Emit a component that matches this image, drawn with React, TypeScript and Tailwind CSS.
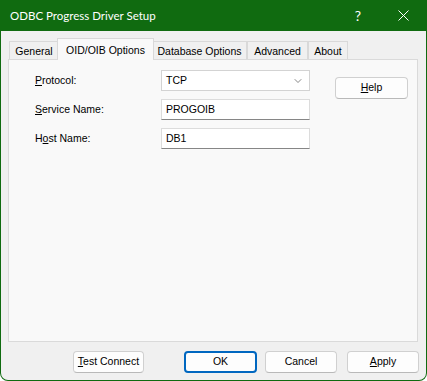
import { ChevronDown } from 'lucide-react';

const ui = "font-['Liberation_Sans',Arial,sans-serif] text-[10.5px] text-black";

function Tab({ label, w, active }: { label: string; w: string; active?: boolean }) {
  return (
    <div
      className={
        (active
          ? 'z-10 -mx-[2px] -mb-px flex h-[22px] items-start justify-center border border-b-0 border-[#d9d9d9] bg-[#f9f9f9] pt-[4px] '
          : 'flex h-[18px] items-start justify-center border border-b-0 border-[#d9d9d9] bg-[#f0f0f0] pt-[2px] ') + w
      }
    >
      <span className="leading-[14px]">{label}</span>
    </div>
  );
}

function Field({ value }: { value: string }) {
  return (
    <div className="flex h-[21px] w-[149px] items-center border border-[#dcdcdc] border-b-[#868686] bg-white pl-[4px]">
      {value}
    </div>
  );
}

function Btn({
  children,
  primary,
  w = 'w-[72px]',
}: {
  children: React.ReactNode;
  primary?: boolean;
  w?: string;
}) {
  return (
    <button
      type="button"
      className={
        'flex h-[22px] items-center justify-center rounded-[4px] bg-[#fdfdfd] ' +
        w +
        (primary
          ? ' border-2 border-[#0067c0]'
          : ' border border-[#d0d0d0] border-b-[#b9b9b9]')
      }
    >
      {children}
    </button>
  );
}

export default function App() {
  return (
    <div className={'flex h-[381px] w-[427px] flex-col rounded-b-[8px] bg-[#106b10] px-px pb-px ' + ui}>
      {/* title bar */}
      <div className="flex h-[31px] shrink-0 items-center pl-[9px] text-white">
        <span className="font-['Lato',sans-serif] text-[11.5px]">ODBC Progress Driver Setup</span>
        <span className="ml-auto mr-[37px] font-['Lato',sans-serif] text-[14px]">?</span>
        <svg width="11" height="11" viewBox="0 0 11 11" className="mr-[17px]">
          <path d="M0.5 0.5 L10.5 10.5 M10.5 0.5 L0.5 10.5" stroke="white" strokeWidth="1" />
        </svg>
      </div>

      <div className="flex flex-1 flex-col rounded-b-[7px] bg-[#f0f0f0] px-[7px] pt-[7px]">
        {/* tabs */}
        <div className="flex items-end pl-[1px]">
          <Tab label="General" w="w-[50px]" />
          <Tab label="OID/OIB Options" w="w-[97px]" active />
          <Tab label="Database Options" w="w-[95px]" />
          <Tab label="Advanced" w="w-[61px]" />
          <Tab label="About" w="w-[40px]" />
        </div>

        {/* panel */}
        <div className="h-[283px] w-[410px] border border-[#dadada] bg-[#f9f9f9] pl-[26px] pt-[10px]">
          <div className="flex">
            <div className="flex flex-col gap-[8px]">
              <div className="flex items-center">
                <span className="w-[126px]">
                  <span className="underline underline-offset-1">P</span>rotocol:
                </span>
                <div className="flex h-[21px] w-[149px] items-center justify-between border border-[#d3d3d3] bg-white pl-[4px] pr-[5px]">
                  TCP
                  <ChevronDown size={12} strokeWidth={1.4} className="text-[#555]" />
                </div>
              </div>
              <div className="flex items-center">
                <span className="w-[126px]">
                  <span className="underline underline-offset-1">S</span>ervice Name:
                </span>
                <Field value="PROGOIB" />
              </div>
              <div className="flex items-center">
                <span className="w-[126px]">
                  H<span className="underline underline-offset-1">o</span>st Name:
                </span>
                <Field value="DB1" />
              </div>
            </div>
            <div className="ml-[25px] mt-[7px]">
              <Btn w="w-[73px]">
                <span>
                  <span className="underline underline-offset-1">H</span>elp
                </span>
              </Btn>
            </div>
          </div>
        </div>

        {/* bottom buttons */}
        <div className="mt-[9px] flex items-center pl-[65px]">
          <Btn w="w-[71px]">
            <span>
              <span className="underline underline-offset-1">T</span>est Connect
            </span>
          </Btn>
          <div className="ml-[40px]">
            <Btn primary w="w-[73px]">OK</Btn>
          </div>
          <div className="ml-[8px]">
            <Btn>Cancel</Btn>
          </div>
          <div className="ml-[10px]">
            <Btn>
              <span>
                <span className="underline underline-offset-1">A</span>pply
              </span>
            </Btn>
          </div>
        </div>
      </div>
    </div>
  );
}
